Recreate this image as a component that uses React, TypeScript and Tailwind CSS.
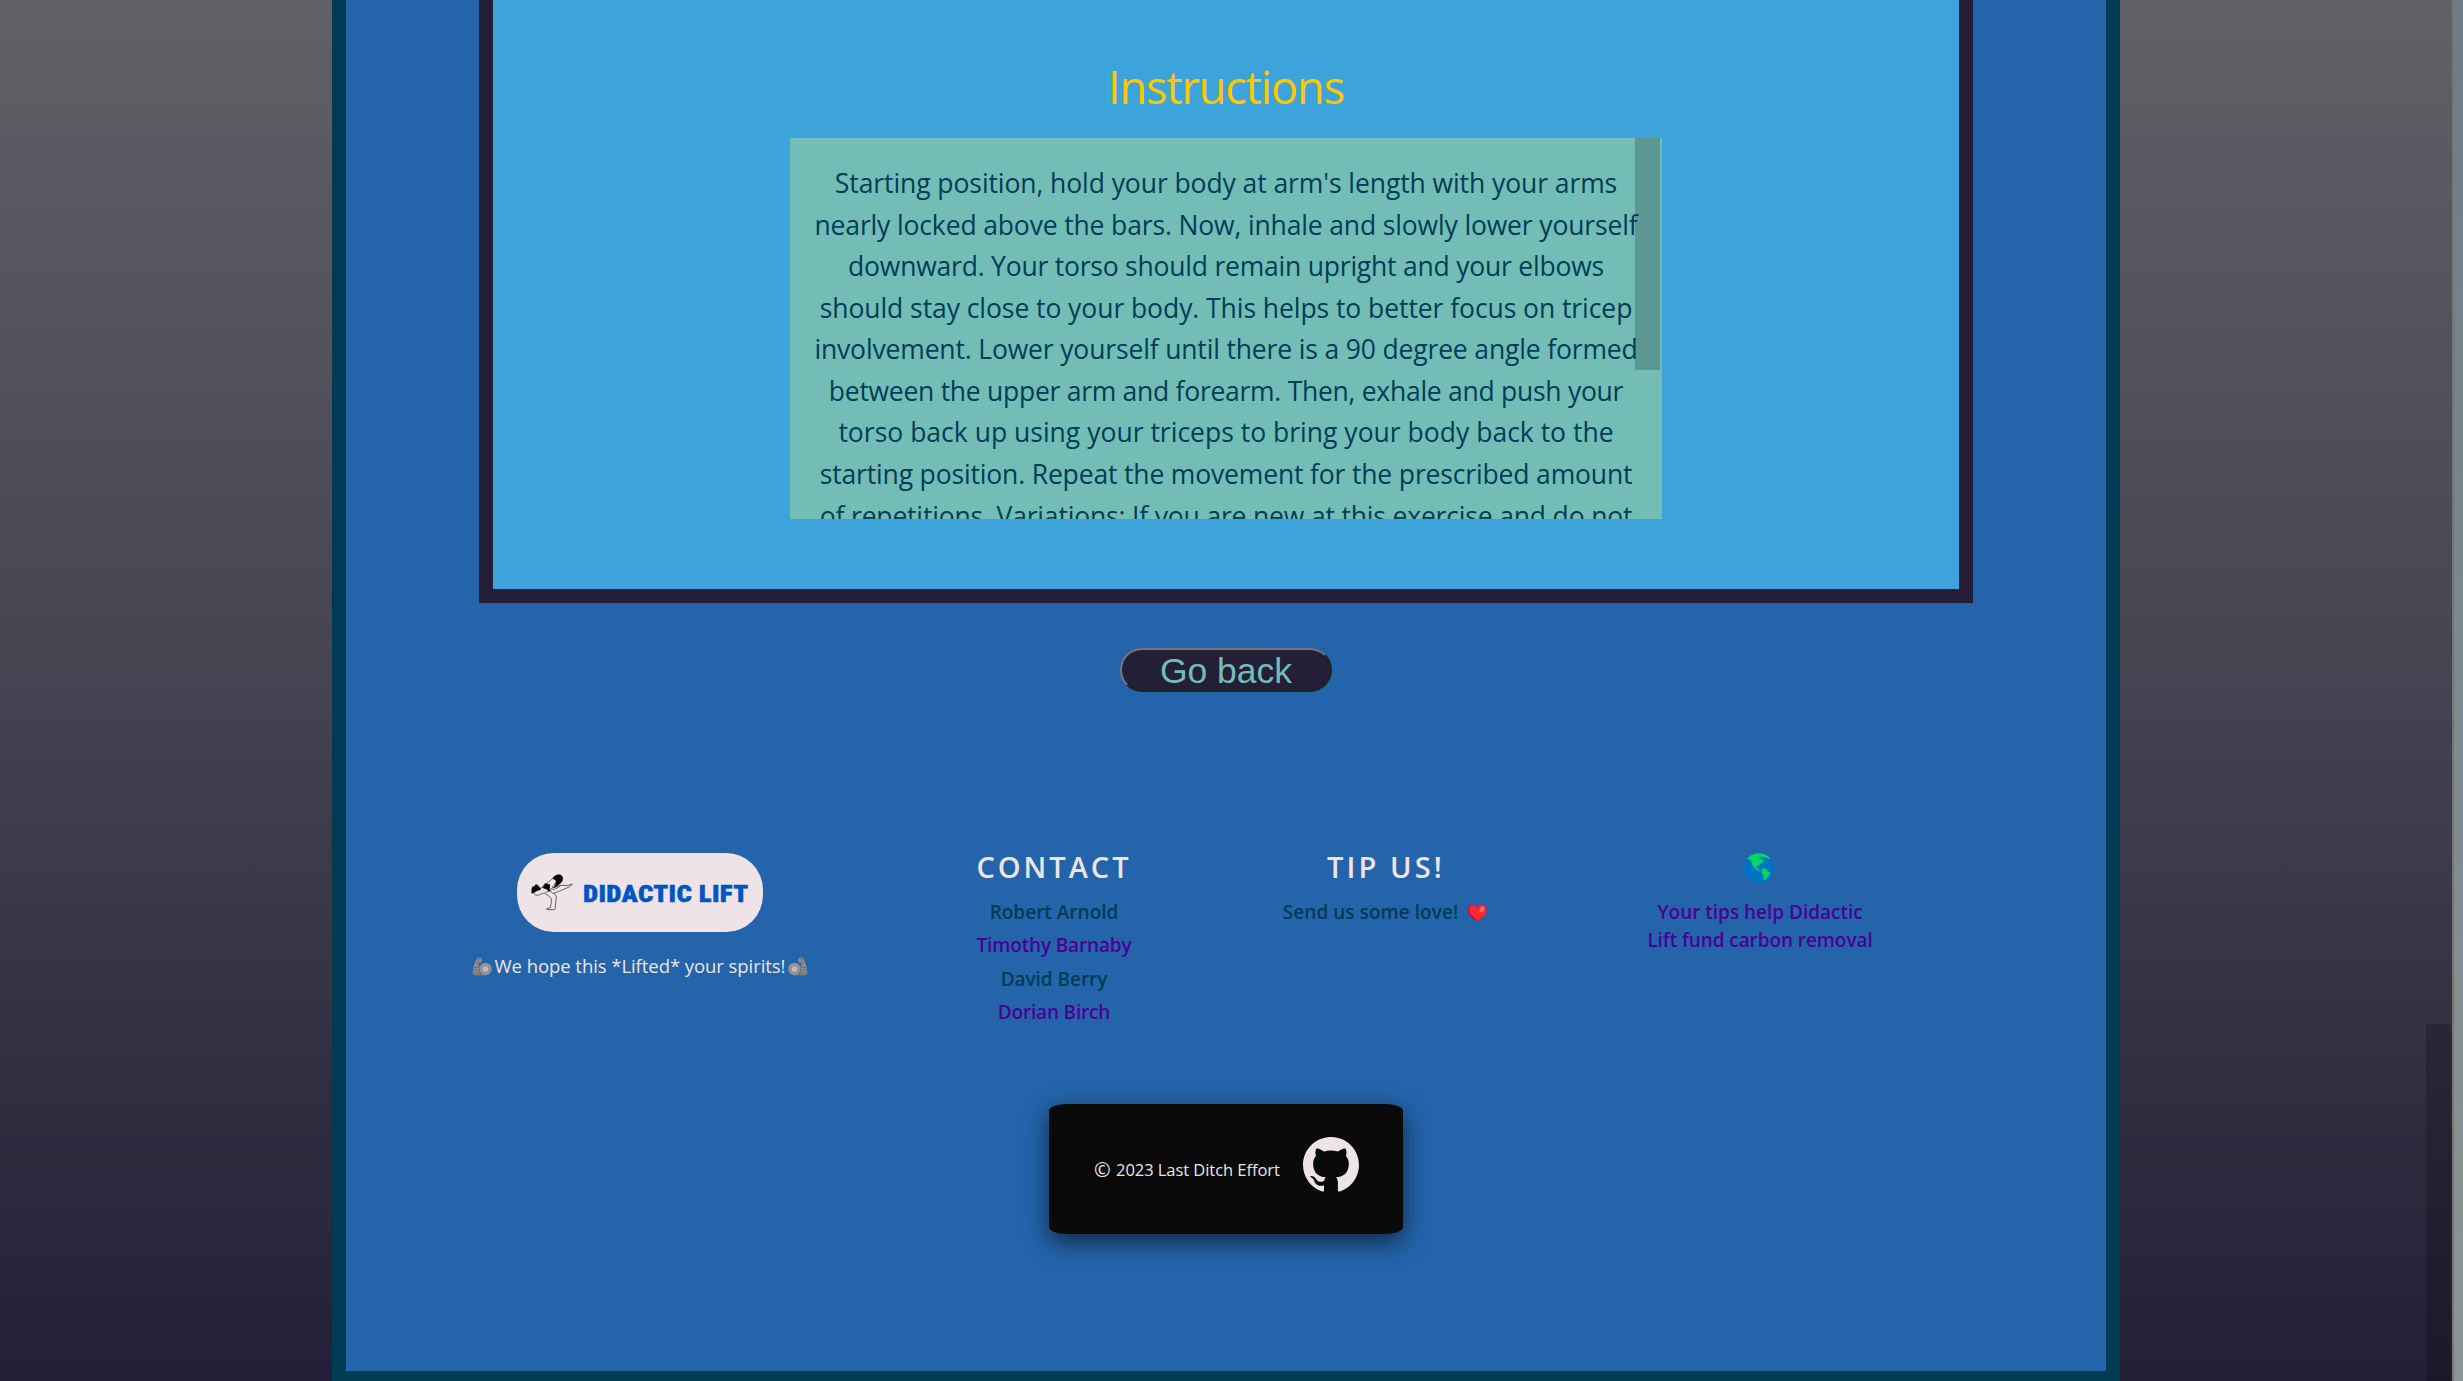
import React from "react";

const instructionLines = [
  { text: "Starting position, hold your body at arm's length with your arms", track: "tracking-[-0.08px]" },
  { text: "nearly locked above the bars. Now, inhale and slowly lower yourself", track: "tracking-[-0.145px]" },
  { text: "downward. Your torso should remain upright and your elbows", track: "tracking-[-0.215px]" },
  { text: "should stay close to your body. This helps to better focus on tricep", track: "tracking-[-0.065px]" },
  { text: "involvement. Lower yourself until there is a 90 degree angle formed", track: "tracking-[-0.155px]" },
  { text: "between the upper arm and forearm. Then, exhale and push your", track: "tracking-[-0.27px]" },
  { text: "torso back up using your triceps to bring your body back to the", track: "tracking-[0.01px]" },
  { text: "starting position. Repeat the movement for the prescribed amount", track: "tracking-[-0.155px]" },
  { text: "of repetitions. Variations: If you are new at this exercise and do not", track: "tracking-[-0.17px]" },
];

const contacts = [
  { name: "Robert Arnold", style: "text-[#003b54]" },
  { name: "Timothy Barnaby", style: "text-[#4b0096] tracking-[-0.16px]" },
  { name: "David Berry", style: "text-[#003b54] tracking-[-0.05px]" },
  { name: "Dorian Birch", style: "text-[#4b0096] tracking-[-0.18px]" },
];

function Yogi() {
  return (
    <svg className="h-[37px] w-[42px] shrink-0" viewBox="214 105 126 111" fill="none" stroke="#222" strokeWidth="2" strokeLinejoin="round" strokeLinecap="round">
      <path d="M220 160c4 9 13 11 20 7 5-3 10-5 15-4l14 9c6 5 7 10 6 17l-3 17-12 4 2 2h23l2-2v-12l3-22c0-7-5-11-11-16" fill="#efe6ea" />
      <path d="M240 150l18-13 22-20 12 8-20 30-14 5" fill="#efe6ea" />
      <path d="M276 160c-5-3-4-8 0-12l28-9 18 1 16-5c-2 4-6 7-10 9l-32 14-16 5z" fill="#efe6ea" />
      <path d="M280 152c7-1 16-6 23-13" />
      <path d="M217 148c0-4 4-6 9-6l2-5c5 0 9 3 9 7l5 3-1 6-7 1-10 6-7 2z" fill="#000" stroke="#000" />
      <path d="M257 134l13 3-1 20-9-7-10-4z" fill="#000" stroke="#000" />
      <path d="M280 117c6-8 14-11 22-9 8 3 9 13 4 20-6 8-14 12-23 18 4-6 7-12 7-20z" fill="#000" stroke="#000" />
    </svg>
  );
}

function MechArm({ flip = false }: { flip?: boolean }) {
  return (
    <svg className={flip ? "h-[19px] w-[20px] shrink-0 -scale-x-100" : "h-[19px] w-[20px] shrink-0"} viewBox="0 0 20 19">
      <path d="M4 3 6 .6l3 .2 1.2 2.8L8.6 6 6.7 5.8l.5 5L8 18H2.600L.5 16 1 11l2-6z" fill="#8b8b8d" />
      <path d="M3 17h12v1.500H3z" fill="#777" />
      <circle cx="13.500" cy="12" r="6.200" fill="#929294" />
      <circle cx="13.500" cy="12" r="2.800" fill="#bcbcbe" />
      <circle cx="4.500" cy="13" r="3" fill="#969698" stroke="#606164" strokeWidth=".8" />
      <circle cx="4.500" cy="13" r="1.100" fill="#606164" />
      <path d="M6 2.500 8 2M4.500 6l2 .4" stroke="#65666a" strokeWidth=".8" />
    </svg>
  );
}

function Heart() {
  return (
    <svg className="ml-[9px] h-[18px] w-[20px]" viewBox="0 0 20 18">
      <path d="M10 17.500C5 14.500.5 10.500.5 5.500.5 2.500 2.600.5 5.200.5 7.400.5 9 1.600 10 3.200 11 1.600 12.600.5 14.800.5c2.600 0 4.700 2 4.700 5 0 5-4.500 9-9.500 12z" fill="#cc0f4a" />
      <path d="M11 16.200C6.500 13.500 2.600 9.800 2.600 5.400c0-2.500 1.600-4.100 3.700-4.100 1.800 0 3 1 4 2.700 1-1.900 2.400-3.200 4.700-3.200 2.600 0 4.500 1.900 4.500 4.700 0 4.300-3.800 8-8.500 10.700z" fill="#ff2b2f" />
      <ellipse cx="15" cy="5.600" rx="2.100" ry="3.100" fill="#ff6f6c" transform="rotate(28 15 5.600)" />
    </svg>
  );
}

function Globe() {
  return (
    <svg className="-ml-[3px] h-[30px] w-[30px]" viewBox="0 0 30 30">
      <circle cx="15" cy="15" r="14.800" fill="#0074c4" />
      <path d="M3 5.500 7 2.200l6-2 5 .2 4 1.400 4.500 3.400-2 .8-3.500-2-2 .2-1.500 2 3 1.500-2 1.500-2 1.500-1.500 2.200-2-.5-.8 1.800 2 1.200 1.300 1.500 1.500.5-1 .6-2.500-.8L11 15.500l-2.500-3-1.500-5z" fill="#00d668" />
      <path d="m17.500 16.500 2.500-1.300 3 1.300.5 1.600 2.500 1.200-.6 3.500-2.400 1.700-1.500 2.500-1.700.5-.4-5-2-3z" fill="#00d668" />
      <path d="M13.500 4.800l3.500-1 2 .8-2.500 1.300z" fill="#0074c4" />
    </svg>
  );
}

function GithubMark() {
  return (
    <svg className="ml-[23px] h-14 w-14" viewBox="0 0 24 24" fill="#eee4e8">
      <path transform="translate(0 -.3)" d="M12 .297c-6.630 0-12 5.373-12 12 0 5.303 3.438 9.800 8.205 11.385.6.113.82-.258.82-.577 0-.285-.01-1.040-.015-2.040-3.338.724-4.042-1.610-4.042-1.610C4.422 18.070 3.633 17.700 3.633 17.700c-1.087-.744.084-.729.084-.729 1.205.084 1.838 1.236 1.838 1.236 1.070 1.835 2.809 1.305 3.495.998.108-.776.417-1.305.76-1.605-2.665-.3-5.466-1.332-5.466-5.930 0-1.310.465-2.380 1.235-3.220-.135-.303-.54-1.523.105-3.176 0 0 1.005-.322 3.300 1.230.96-.267 1.980-.399 3-.405 1.020.006 2.040.138 3 .405 2.280-1.552 3.285-1.230 3.285-1.230.645 1.653.24 2.873.12 3.176.765.84 1.230 1.910 1.230 3.220 0 4.610-2.805 5.625-5.475 5.920.42.36.81 1.096.81 2.220 0 1.606-.015 2.896-.015 3.286 0 .315.21.69.825.57C20.565 22.092 24 17.592 24 12.297c0-6.627-5.373-12-12-12" />
    </svg>
  );
}

export default function App() {
  return (
    <div className="flex h-[1381px] w-[2463px] overflow-hidden whitespace-nowrap bg-[#241f36] font-['Open_Sans','Noto_Sans',sans-serif]">
      <div className="relative flex w-[2452px] justify-center bg-linear-to-b from-[#606266] via-[#454351] to-[#241f36]">
        <main className="flex h-[1385px] w-[1788px] flex-col items-center border-[14px] border-t-0 border-[#003b54] bg-[#2464ab]">
          <section className="flex h-[603px] w-[1494px] shrink-0 flex-col items-center border-[14px] border-t-0 border-[#241f36] bg-[#3ca4da]">
            <h1 className="mt-[54px] h-[84px] text-[45px] leading-[65px] tracking-[-1.05px] text-[#ffc700]">Instructions</h1>
            <div className="relative h-[381px] w-[872px] overflow-hidden bg-[#73bdb6] pt-[25px]">
              <div className="absolute top-0 right-[2px] h-[232px] w-[25px] bg-[#5c9791]" />
              <div className="relative flex flex-col items-center text-[26.5px] leading-[41.57px] text-[#003d56]">
                {instructionLines.map((line) => (
                  <p key={line.text} className={line.track}>{line.text}</p>
                ))}
              </div>
            </div>
          </section>

          <button className="mt-[45px] flex h-11 w-[212px] shrink-0 items-center justify-center rounded-full border-2 border-t-[#767676] border-r-[#212121] border-b-[#212121] border-l-[#767676] bg-[#241f36] pt-[3px] font-['Liberation_Sans',Arial,sans-serif] text-[35.5px] leading-none text-[#73bdb6]">
            Go back
          </button>

          <footer className="flex w-full flex-col items-center">
            <div className="mt-[155px] flex h-[257px] w-full items-start pl-[126px] text-center text-[19px] font-semibold">
              <div className="flex w-[336px] flex-col items-center pt-[6px]">
                <div className="flex h-[79px] w-[246px] items-center rounded-[37px] bg-[#eee4e8] pl-[14px]">
                  <Yogi />
                  <div className="w-[175px] pt-[4px] pl-[10px] text-left">
                    <span className="inline-block origin-left scale-x-[1.1] font-['Roboto',sans-serif] text-[24.500px] leading-[28px] font-black tracking-[0.3px] text-[#0055c4] [font-stretch:75%] [-webkit-text-stroke:0.4px_#0055c4]">DIDACTIC LIFT</span>
                  </div>
                </div>
                <div className="mt-[20px] flex h-7 w-full items-center justify-between">
                  <MechArm />
                  <p className="text-[18.5px] leading-7 font-normal tracking-[-0.06px] text-[#eee4e8]">We hope this *Lifted* your spirits!</p>
                  <MechArm flip />
                </div>
              </div>

              <div className="ml-[146px] flex w-[200px] flex-col items-center">
                <h2 className="mb-[9px] text-[29px] leading-10 tracking-[3px] text-[#eee4e8]">CONTACT</h2>
                {contacts.map((contact) => (
                  <p key={contact.name} className="leading-[33.4px]"><span className={contact.style}>{contact.name}</span></p>
                ))}
              </div>

              <div className="ml-[121px] flex w-[220px] flex-col items-center">
                <h2 className="mb-[9px] pl-[2px] text-[29px] leading-10 tracking-[3.100px] text-[#eee4e8]">TIP US!</h2>
                <p className="flex items-center leading-[33.4px] tracking-[0.05px] text-[#003b54]">Send us some love!<Heart /></p>
              </div>

              <div className="ml-[145px] flex w-[240px] flex-col items-center pt-[6px] text-[#4b0096]">
                <Globe />
                <p className="mt-[15px] leading-7 tracking-[-0.02px]">Your tips help Didactic</p>
                <p className="leading-7 tracking-[-0.08px]">Lift fund carbon removal</p>
              </div>
            </div>

            <div className="flex h-[130px] w-[354px] items-center rounded-[18px/7px] bg-[#0a0a0a] pl-[45px] text-[#eee4e8] shadow-[0_8px_24px_rgba(0,0,0,0.6)]">
              <span className="mt-px w-[22px] text-[20px] leading-6">©</span>
              <span className="mt-px text-[16.5px] leading-6 tracking-[-0.05px]">2023 Last Ditch Effort</span>
              <div className="-mt-[9px]"><GithubMark /></div>
            </div>
          </footer>
        </main>
        <div className="absolute right-px bottom-0 h-[357px] w-[25px] bg-black/20" />
      </div>
      <div className="h-full w-[2px] bg-[#777675]" />
      <div className="h-full w-[9px] bg-linear-to-b from-[#6d7d85] to-[#8b9595]" />
    </div>
  );
}
